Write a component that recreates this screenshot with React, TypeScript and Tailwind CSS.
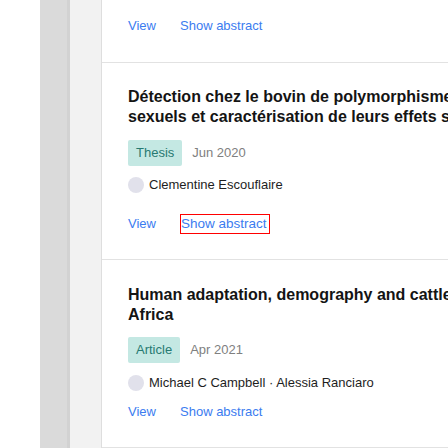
import React from 'react';

type Pub = {
  lines: string[];
  type: string;
  date: string;
  authors: string;
  focused?: boolean;
};

const pubs: Pub[] = [
  {
    lines: [
      'Détection chez le bovin de polymorphismes',
      'sexuels et caractérisation de leurs effets sur la fertilité',
    ],
    type: 'Thesis',
    date: 'Jun 2020',
    authors: 'Clementine Escouflaire',
    focused: true,
  },
  {
    lines: ['Human adaptation, demography and cattle domestication in', 'Africa'],
    type: 'Article',
    date: 'Apr 2021',
    authors: 'Michael C Campbell · Alessia Ranciaro',
  },
];

function Actions({ focused }: { focused?: boolean }) {
  return (
    <div className="flex h-[20px] items-center text-[13px] leading-[20px] text-[#3b7cf0]">
      <span className="w-[52px]">View</span>
      <span
        className={
          focused
            ? 'block w-[90px] overflow-hidden whitespace-nowrap border border-[#ff0000] pr-[4px] text-[13.5px] leading-[18px]'
            : 'block whitespace-nowrap'
        }
      >
        Show abstract
      </span>
    </div>
  );
}

function Card({ pub }: { pub: Pub }) {
  return (
    <div className={`border-b border-[#e2e2e2] pl-[26px] ${pub.focused ? 'pt-[24px] pb-[25px]' : 'pt-[25px] pb-[25px]'}`}>
      <h2 className="whitespace-nowrap text-[16px] font-bold leading-[20px] text-[#141414]">
        {pub.lines.map((l) => (
          <span key={l} className="block">
            {l}
          </span>
        ))}
      </h2>
      <div className={`flex items-center gap-[10px] ${pub.focused ? 'mt-[13px]' : 'mt-[12px]'}`}>
        <span className="rounded-[2px] bg-[#c4e8e3] px-[8px] text-[13px] leading-[26px] text-[#277a72]">{pub.type}</span>
        <span className="text-[13px] text-[#808080]">{pub.date}</span>
      </div>
      <div className={`flex items-center gap-[5px] ${pub.focused ? 'mt-[11px]' : 'mt-[12px]'}`}>
        <span className="h-[16px] w-[16px] rounded-full bg-[#e1e1eb]" />
        <span className="text-[13px] leading-[16px] text-[#1e1e1e]">{pub.authors}</span>
      </div>
      <div className={pub.focused ? 'mt-[21px]' : 'mt-[11px]'}>
        <Actions focused={pub.focused} />
      </div>
    </div>
  );
}

export default function App() {
  return (
    <div className="flex h-[448px] w-[448px] overflow-hidden bg-white font-['Liberation_Sans',Arial,sans-serif]">
      <div className="w-[40px] shrink-0 bg-white" />
      <div className="flex w-[30px] shrink-0">
        <div className="flex-1 bg-[#dadada]" />
        <div className="w-[3px] bg-[#d2d2d2]" />
      </div>
      <div className="w-[31px] shrink-0 bg-[#f2f2f2]" />
      <main className="min-w-0 flex-1 border-l border-[#dedede]">
        <div className="border-b border-[#e2e2e2] pt-[16px] pb-[26px] pl-[26px]">
          <Actions />
        </div>
        {pubs.map((p) => (
          <Card key={p.type} pub={p} />
        ))}
      </main>
    </div>
  );
}
